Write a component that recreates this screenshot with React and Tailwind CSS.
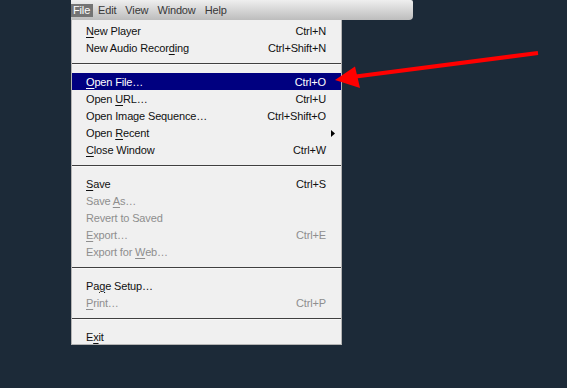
import React from "react";

const U = ({ children }) => (
  <span className="underline decoration-1 underline-offset-[2px]">{children}</span>
);

const items = [
  { t: [<U key="a">N</U>, "ew Player"], k: "Ctrl+N" },
  { t: ["New Audio Recor", <U key="a">d</U>, "ing"], k: "Ctrl+Shift+N" },
  { sep: true },
  { t: [<U key="a">O</U>, "pen File…"], k: "Ctrl+O", hl: true },
  { t: ["Open ", <U key="a">U</U>, "RL…"], k: "Ctrl+U" },
  { t: ["Open Image Sequence…"], k: "Ctrl+Shift+O" },
  { t: ["Open ", <U key="a">R</U>, "ecent"], sub: true },
  { t: [<U key="a">C</U>, "lose Window"], k: "Ctrl+W" },
  { sep: true },
  { t: [<U key="a">S</U>, "ave"], k: "Ctrl+S" },
  { t: ["Save ", <U key="a">A</U>, "s…"], dis: true },
  { t: ["Revert to Saved"], dis: true },
  { t: [<U key="a">E</U>, "xport…"], k: "Ctrl+E", dis: true },
  { t: ["Export for ", <U key="a">W</U>, "eb…"], dis: true },
  { sep: true },
  { t: ["Pa", <U key="a">g</U>, "e Setup…"] },
  { t: [<U key="a">P</U>, "rint…"], k: "Ctrl+P", dis: true },
  { sep: true },
  { t: ["E", <U key="a">x</U>, "it"] },
];

export default function App() {
  return (
    <div
      className="relative w-[567px] h-[388px] overflow-hidden bg-[#1c2a38] text-[11px] leading-none tracking-[-0.15px]"
      style={{ fontFamily: '"Liberation Sans", Arial, sans-serif' }}
    >
      <div className="flex flex-col pl-[71px]">
        <div className="flex items-center w-[342px] h-[20px] rounded-br-[4px] rounded-tr-[2px] bg-gradient-to-b from-[#efefef] via-[#d6d6d6] to-[#bdbdbd] text-[#383838]">
          <span className="flex items-center h-[13px] w-[22px] pl-[2px] bg-[#747474] text-white">File</span>
          <span className="ml-[5px]">Edit</span>
          <span className="ml-[9px]">View</span>
          <span className="ml-[9px]">Window</span>
          <span className="ml-[9px]">Help</span>
        </div>
        <div className="w-[271px] h-[325px] overflow-hidden bg-[#f0f0f0] border border-[#b4b4b4] border-t-0 pt-[2px]">
          {items.map((it, i) =>
            it.sep ? (
              <div key={i} className="h-[17px] pt-[7px]">
                <div className="h-[2px] border-t border-[#404040] border-b border-b-[#f8f8f8]" />
              </div>
            ) : (
              <div
                key={i}
                className={`flex items-center justify-between h-[17px] pt-[1px] pl-[14px] pr-[15px] ${
                  it.hl ? "bg-[#000080] text-white" : it.dis ? "text-[#8e8e8e]" : "text-[#111]"
                }`}
              >
                <span>{it.t}</span>
                {it.k && <span>{it.k}</span>}
                {it.sub && (
                  <svg width="4" height="7" viewBox="0 0 4 7" className="-mr-[9px]">
                    <path d="M0 0 L4 3.5 L0 7 Z" fill="#000" />
                  </svg>
                )}
              </div>
            )
          )}
        </div>
      </div>
      <svg className="absolute inset-0 pointer-events-none" width="567" height="388">
        <line x1="538" y1="53" x2="352" y2="77" stroke="#ff0000" strokeWidth="4" />
        <polygon points="335,80 355,66.5 360,88" fill="#ff0000" />
      </svg>
    </div>
  );
}
